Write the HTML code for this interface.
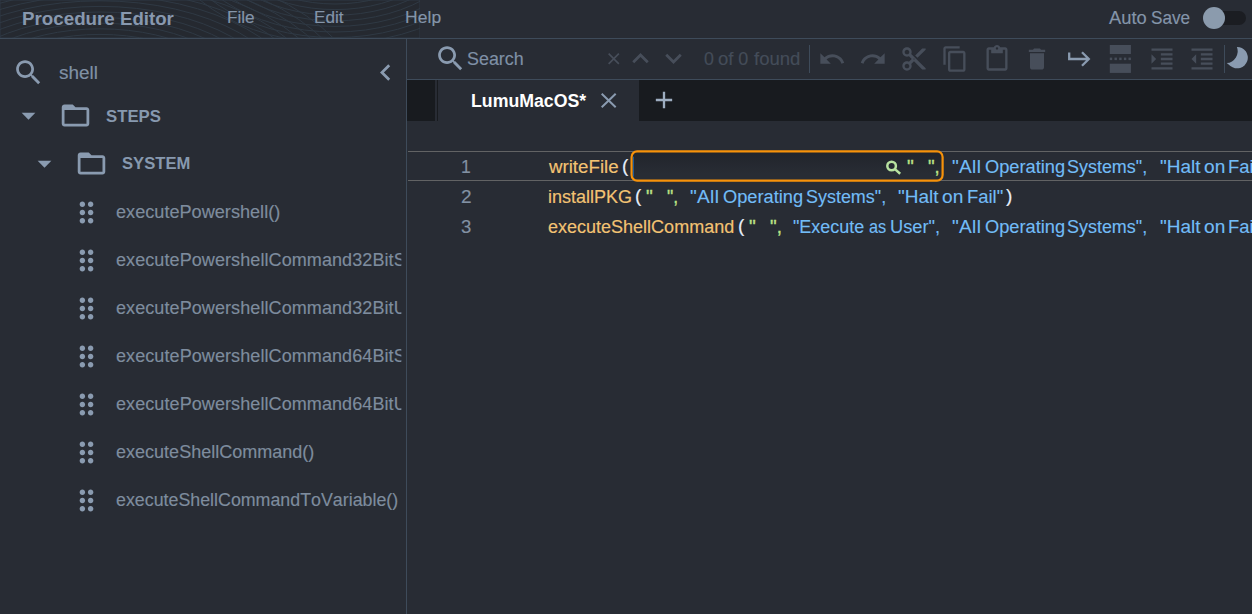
<!DOCTYPE html>
<html lang="en">
<head>
<meta charset="utf-8">
<title>Procedure Editor</title>
<style>
html,body{margin:0;padding:0;}
body{width:1252px;height:614px;overflow:hidden;background:#282c34;font-family:"Liberation Sans",sans-serif;position:relative;color:#8899ad;}
.abs{position:absolute;}
.t{position:absolute;white-space:pre;line-height:1;font-kerning:none;transform-origin:0 0;-webkit-text-stroke:0.15px;}
.b{-webkit-text-stroke:0;}
svg{position:absolute;display:block;overflow:visible;}
#waves{overflow:hidden;}
#header{left:0;top:0;width:1252px;height:38px;border-bottom:1px solid #3e4b5a;overflow:hidden;}
#sidebar{left:0;top:39px;width:406px;height:575px;border-right:1px solid #3e4b5a;overflow:hidden;}
#toolbar{left:407px;top:39px;width:845px;height:40px;border-bottom:1px solid #3e4b5a;}
#tabbar{left:407px;top:80px;width:845px;height:41px;background:#181b1f;}
#editor{left:407px;top:121px;width:845px;height:493px;overflow:hidden;}
.ic{fill:#8a9bb0;}
.dim{fill:#474e5a;}
.item{color:#7e8c9e;width:285.6px;overflow:hidden;-webkit-text-stroke:0.15px;}
.fn{color:#f3c373;-webkit-text-stroke:0.15px;}
.pn{color:#e6eefa;}
.st{color:#72bcf7;-webkit-text-stroke:0.12px;}
.gr{color:#bde386;-webkit-text-stroke:0.3px;}
.ln{color:#8291a3;}
</style>
</head>
<body>

<!-- ===== HEADER ===== -->
<div id="header" class="abs">
  <svg id="waves" style="left:0;top:0" width="420" height="38" viewBox="0 0 420 38" fill="none" stroke="#2f3944" stroke-width="1"><rect x="0" y="0" width="420" height="38" fill="#252930"/><ellipse cx="100" cy="110" rx="126" ry="70.0"/><ellipse cx="100" cy="110" rx="136" ry="75.6"/><ellipse cx="100" cy="110" rx="146" ry="81.2"/><ellipse cx="100" cy="110" rx="156" ry="86.8"/><ellipse cx="100" cy="110" rx="166" ry="92.4"/><ellipse cx="100" cy="110" rx="176" ry="98.0"/><ellipse cx="100" cy="110" rx="186" ry="103.6"/><ellipse cx="100" cy="110" rx="197" ry="109.2"/><ellipse cx="100" cy="110" rx="207" ry="114.8"/><ellipse cx="100" cy="110" rx="217" ry="120.4"/><ellipse cx="100" cy="110" rx="227" ry="126.0"/><ellipse cx="100" cy="110" rx="237" ry="131.6"/><ellipse cx="100" cy="110" rx="247" ry="137.2"/><ellipse cx="100" cy="110" rx="257" ry="142.8"/><ellipse cx="100" cy="110" rx="267" ry="148.4"/><ellipse cx="335" cy="-72" rx="114" ry="76.0"/><ellipse cx="335" cy="-72" rx="122" ry="81.6"/><ellipse cx="335" cy="-72" rx="131" ry="87.2"/><ellipse cx="335" cy="-72" rx="139" ry="92.8"/><ellipse cx="335" cy="-72" rx="148" ry="98.4"/><ellipse cx="335" cy="-72" rx="156" ry="104.0"/><ellipse cx="335" cy="-72" rx="164" ry="109.6"/><ellipse cx="335" cy="-72" rx="173" ry="115.2"/></svg>
  <div class="abs" id="brand">
  <span class="t b" style="left:21.7px;top:10.0px;font-size:18px;font-weight:700;color:#8898ae;transform:scaleX(1.042)">Procedure</span>
  <span class="t b" style="left:119.7px;top:10.0px;font-size:18px;font-weight:700;color:#8898ae;transform:scaleX(1.035)">Editor</span>
  </div>
  <div class="t" style="left:226.6px;top:9.7px;font-size:16px;color:#8495aa;transform:scaleX(1.073)">File</div>
  <div class="t" style="left:314.3px;top:9.7px;font-size:16px;color:#8495aa;transform:scaleX(1.071)">Edit</div>
  <div class="t" style="left:404.8px;top:9.7px;font-size:16px;letter-spacing:0.12px;color:#8495aa;transform:scaleX(1.090)">Help</div>
  <div class="abs" id="autosave">
  <span class="t" style="left:1109.2px;top:9.0px;font-size:18px;color:#8495aa;transform:scaleX(1.018)">Auto</span>
  <span class="t" style="left:1150.7px;top:9.0px;font-size:18px;color:#8495aa;transform:scaleX(0.954)">Save</span>
  </div>
  <div class="abs" style="left:1213px;top:11px;width:33px;height:14px;border-radius:7px;background:#1b1d22"></div>
  <div class="abs" style="left:1202.8px;top:6.8px;width:22px;height:22px;border-radius:50%;background:#8b9bad"></div>
</div>

<!-- ===== SIDEBAR ===== -->
<div id="sidebar" class="abs">
  <svg class="ic" style="left:11.8px;top:17.1px" width="33" height="33" viewBox="0 0 24 24"><path d="M15.5 14h-.79l-.28-.27C15.41 12.59 16 11.11 16 9.5 16 5.91 13.09 3 9.5 3S3 5.91 3 9.5 5.91 16 9.5 16c1.61 0 3.09-.59 4.23-1.57l.27.28v.79l5 4.99L20.49 19l-4.99-5zm-6 0C7.01 14 5 11.99 5 9.5S7.01 5 9.5 5 14 7.01 14 9.5 11.99 14 9.5 14z"/></svg>
  <div class="t" style="left:58.6px;top:26.1px;font-size:17.5px;color:#8091a5;transform:scaleX(1.083)">shell</div>
  <svg class="ic" style="left:369.0px;top:16.6px" width="33" height="33" viewBox="0 0 24 24"><path d="M15.41 7.41L14 6l-6 6 6 6 1.41-1.41L10.83 12z"/></svg>
  <svg class="ic" style="left:12.0px;top:59.6px" width="33" height="33" viewBox="0 0 24 24"><path d="M7 10l5 5 5-5z"/></svg>
  <svg class="ic" style="left:58.6px;top:59.6px" width="33" height="33" viewBox="0 0 24 24"><path d="M20 6h-8l-2-2H4c-1.1 0-1.99.9-1.99 2L2 18c0 1.1.9 2 2 2h16c1.1 0 2-.9 2-2V8c0-1.1-.9-2-2-2zm0 12H4V8h16v10z"/></svg>
  <div class="t b" style="left:105.6px;top:69.2px;font-size:16.5px;font-weight:700;color:#8799af;transform:scaleX(1.015)">STEPS</div>
  <svg class="ic" style="left:28.4px;top:107.6px" width="33" height="33" viewBox="0 0 24 24"><path d="M7 10l5 5 5-5z"/></svg>
  <svg class="ic" style="left:75.2px;top:107.6px" width="33" height="33" viewBox="0 0 24 24"><path d="M20 6h-8l-2-2H4c-1.1 0-1.99.9-1.99 2L2 18c0 1.1.9 2 2 2h16c1.1 0 2-.9 2-2V8c0-1.1-.9-2-2-2zm0 12H4V8h16v10z"/></svg>
  <div class="t b" style="left:122.3px;top:116.2px;font-size:16.5px;font-weight:700;color:#8799af;transform:scaleX(1.007)">SYSTEM</div>
  <svg class="ic" style="left:69.7px;top:156.8px" width="33" height="33" viewBox="0 0 24 24"><path d="M11 18c0 1.1-.9 2-2 2s-2-.9-2-2 .9-2 2-2 2 .9 2 2zm-2-8c-1.1 0-2 .9-2 2s.9 2 2 2 2-.9 2-2-.9-2-2-2zm0-6c-1.1 0-2 .9-2 2s.9 2 2 2 2-.9 2-2-.9-2-2-2zm6 4c1.1 0 2-.9 2-2s-.9-2-2-2-2 .9-2 2 .9 2 2 2zm0 2c-1.1 0-2 .9-2 2s.9 2 2 2 2-.9 2-2-.9-2-2-2zm0 6c-1.1 0-2 .9-2 2s.9 2 2 2 2-.9 2-2-.9-2-2-2z"/></svg>
  <div class="t item" style="left:116.3px;top:164.4px;font-size:17.5px;height:22px;line-height:22px;margin-top:-2.25px;transform:scaleX(1.036)">executePowershell()</div>
  <svg class="ic" style="left:69.7px;top:204.8px" width="33" height="33" viewBox="0 0 24 24"><path d="M11 18c0 1.1-.9 2-2 2s-2-.9-2-2 .9-2 2-2 2 .9 2 2zm-2-8c-1.1 0-2 .9-2 2s.9 2 2 2 2-.9 2-2-.9-2-2-2zm0-6c-1.1 0-2 .9-2 2s.9 2 2 2 2-.9 2-2-.9-2-2-2zm6 4c1.1 0 2-.9 2-2s-.9-2-2-2-2 .9-2 2 .9 2 2 2zm0 2c-1.1 0-2 .9-2 2s.9 2 2 2 2-.9 2-2-.9-2-2-2zm0 6c-1.1 0-2 .9-2 2s.9 2 2 2 2-.9 2-2-.9-2-2-2z"/></svg>
  <div class="t item" style="left:116.3px;top:212.4px;font-size:17.5px;letter-spacing:0.072px;height:22px;line-height:22px;margin-top:-2.25px;transform:scaleX(1.03);width:276.9px">executePowershellCommand32BitSystem()</div>
  <svg class="ic" style="left:69.7px;top:252.8px" width="33" height="33" viewBox="0 0 24 24"><path d="M11 18c0 1.1-.9 2-2 2s-2-.9-2-2 .9-2 2-2 2 .9 2 2zm-2-8c-1.1 0-2 .9-2 2s.9 2 2 2 2-.9 2-2-.9-2-2-2zm0-6c-1.1 0-2 .9-2 2s.9 2 2 2 2-.9 2-2-.9-2-2-2zm6 4c1.1 0 2-.9 2-2s-.9-2-2-2-2 .9-2 2 .9 2 2 2zm0 2c-1.1 0-2 .9-2 2s.9 2 2 2 2-.9 2-2-.9-2-2-2zm0 6c-1.1 0-2 .9-2 2s.9 2 2 2 2-.9 2-2-.9-2-2-2z"/></svg>
  <div class="t item" style="left:116.3px;top:260.4px;font-size:17.5px;letter-spacing:0.072px;height:22px;line-height:22px;margin-top:-2.25px;transform:scaleX(1.03);width:276.9px">executePowershellCommand32BitUser()</div>
  <svg class="ic" style="left:69.7px;top:300.8px" width="33" height="33" viewBox="0 0 24 24"><path d="M11 18c0 1.1-.9 2-2 2s-2-.9-2-2 .9-2 2-2 2 .9 2 2zm-2-8c-1.1 0-2 .9-2 2s.9 2 2 2 2-.9 2-2-.9-2-2-2zm0-6c-1.1 0-2 .9-2 2s.9 2 2 2 2-.9 2-2-.9-2-2-2zm6 4c1.1 0 2-.9 2-2s-.9-2-2-2-2 .9-2 2 .9 2 2 2zm0 2c-1.1 0-2 .9-2 2s.9 2 2 2 2-.9 2-2-.9-2-2-2zm0 6c-1.1 0-2 .9-2 2s.9 2 2 2 2-.9 2-2-.9-2-2-2z"/></svg>
  <div class="t item" style="left:116.3px;top:308.4px;font-size:17.5px;letter-spacing:0.072px;height:22px;line-height:22px;margin-top:-2.25px;transform:scaleX(1.03);width:276.9px">executePowershellCommand64BitSystem()</div>
  <svg class="ic" style="left:69.7px;top:348.8px" width="33" height="33" viewBox="0 0 24 24"><path d="M11 18c0 1.1-.9 2-2 2s-2-.9-2-2 .9-2 2-2 2 .9 2 2zm-2-8c-1.1 0-2 .9-2 2s.9 2 2 2 2-.9 2-2-.9-2-2-2zm0-6c-1.1 0-2 .9-2 2s.9 2 2 2 2-.9 2-2-.9-2-2-2zm6 4c1.1 0 2-.9 2-2s-.9-2-2-2-2 .9-2 2 .9 2 2 2zm0 2c-1.1 0-2 .9-2 2s.9 2 2 2 2-.9 2-2-.9-2-2-2zm0 6c-1.1 0-2 .9-2 2s.9 2 2 2 2-.9 2-2-.9-2-2-2z"/></svg>
  <div class="t item" style="left:116.3px;top:356.4px;font-size:17.5px;letter-spacing:0.072px;height:22px;line-height:22px;margin-top:-2.25px;transform:scaleX(1.03);width:276.9px">executePowershellCommand64BitUser()</div>
  <svg class="ic" style="left:69.7px;top:396.8px" width="33" height="33" viewBox="0 0 24 24"><path d="M11 18c0 1.1-.9 2-2 2s-2-.9-2-2 .9-2 2-2 2 .9 2 2zm-2-8c-1.1 0-2 .9-2 2s.9 2 2 2 2-.9 2-2-.9-2-2-2zm0-6c-1.1 0-2 .9-2 2s.9 2 2 2 2-.9 2-2-.9-2-2-2zm6 4c1.1 0 2-.9 2-2s-.9-2-2-2-2 .9-2 2 .9 2 2 2zm0 2c-1.1 0-2 .9-2 2s.9 2 2 2 2-.9 2-2-.9-2-2-2zm0 6c-1.1 0-2 .9-2 2s.9 2 2 2 2-.9 2-2-.9-2-2-2z"/></svg>
  <div class="t item" style="left:116.3px;top:404.4px;font-size:17.5px;height:22px;line-height:22px;margin-top:-2.25px;transform:scaleX(1.030)">executeShellCommand()</div>
  <svg class="ic" style="left:69.7px;top:444.8px" width="33" height="33" viewBox="0 0 24 24"><path d="M11 18c0 1.1-.9 2-2 2s-2-.9-2-2 .9-2 2-2 2 .9 2 2zm-2-8c-1.1 0-2 .9-2 2s.9 2 2 2 2-.9 2-2-.9-2-2-2zm0-6c-1.1 0-2 .9-2 2s.9 2 2 2 2-.9 2-2-.9-2-2-2zm6 4c1.1 0 2-.9 2-2s-.9-2-2-2-2 .9-2 2 .9 2 2 2zm0 2c-1.1 0-2 .9-2 2s.9 2 2 2 2-.9 2-2-.9-2-2-2zm0 6c-1.1 0-2 .9-2 2s.9 2 2 2 2-.9 2-2-.9-2-2-2z"/></svg>
  <div class="t item" style="left:116.3px;top:452.4px;font-size:17.5px;height:22px;line-height:22px;margin-top:-2.25px;transform:scaleX(1.018)">executeShellCommandToVariable()</div>
</div>

<!-- ===== TOOLBAR ===== -->
<div id="toolbar" class="abs">
  <svg class="ic" style="left:26.6px;top:2.9px" width="33" height="33" viewBox="0 0 24 24"><path d="M15.5 14h-.79l-.28-.27C15.41 12.59 16 11.11 16 9.5 16 5.91 13.09 3 9.5 3S3 5.91 3 9.5 5.91 16 9.5 16c1.61 0 3.09-.59 4.23-1.57l.27.28v.79l5 4.99L20.49 19l-4.99-5zm-6 0C7.01 14 5 11.99 5 9.5S7.01 5 9.5 5 14 7.01 14 9.5 11.99 14 9.5 14z"/></svg>
  <div class="t" style="left:59.6px;top:11.0px;font-size:18px;color:#7f90a6;transform:scaleX(0.994)">Search</div>
  <svg class="dim" style="left:197.4px;top:9.9px" width="19.5" height="19.5" viewBox="0 0 24 24"><path d="M19 6.41L17.59 5 12 10.59 6.41 5 5 6.41 10.59 12 5 17.59 6.41 19 12 13.41 17.59 19 19 17.59 13.41 12z"/></svg>
  <svg class="dim" style="left:216.7px;top:3.1px" width="33" height="33" viewBox="0 0 24 24"><path d="M12 8l-6 6 1.41 1.41L12 10.83l4.59 4.58L18 14z"/></svg>
  <svg class="dim" style="left:249.7px;top:3.0px" width="33" height="33" viewBox="0 0 24 24"><path d="M16.59 8.59L12 13.17 7.41 8.59 6 10l6 6 6-6z"/></svg>
  <div class="abs" id="found">
  <span class="t" style="left:296.5px;top:11.0px;font-size:18px;color:#444c59;transform:scaleX(0.988)">0</span>
  <span class="t" style="left:311.2px;top:11.0px;font-size:18px;color:#444c59;transform:scaleX(1.029)">of</span>
  <span class="t" style="left:331.3px;top:11.0px;font-size:18px;color:#444c59">0</span>
  <span class="t" style="left:346.6px;top:11.0px;font-size:18px;color:#444c59;transform:scaleX(1.031)">found</span>
  </div>
  <div class="abs" style="left:402px;top:6px;width:1px;height:28px;background:#3e4b5a"></div>
  <svg class="dim" style="left:410.6px;top:6.0px" width="28" height="28" viewBox="0 0 24 24"><path d="M12.5 8c-2.65 0-5.05.99-6.9 2.6L2 7v9h9l-3.62-3.62c1.39-1.16 3.16-1.88 5.12-1.88 3.54 0 6.55 2.31 7.6 5.5l2.37-.78C21.08 11.03 17.15 8 12.5 8z"/></svg>
  <svg class="dim" style="left:451.8px;top:6.0px" width="28" height="28" viewBox="0 0 24 24"><path d="M18.4 10.6C16.55 8.99 14.15 8 11.5 8c-4.65 0-8.58 3.03-9.96 7.22L3.9 16c1.05-3.19 4.05-5.5 7.6-5.5 1.95 0 3.73.72 5.12 1.88L13 16h9V7l-3.6 3.6z"/></svg>
  <svg class="dim" style="left:493.0px;top:6.0px" width="28" height="28" viewBox="0 0 24 24"><path d="M9.64 7.64c.23-.5.36-1.05.36-1.64 0-2.21-1.79-4-4-4S2 3.79 2 6s1.79 4 4 4c.59 0 1.14-.13 1.64-.36L10 12l-2.36 2.36C7.14 14.13 6.59 14 6 14c-2.21 0-4 1.79-4 4s1.79 4 4 4 4-1.79 4-4c0-.59-.13-1.14-.36-1.64L12 14l7 7h3v-1L9.64 7.64zM6 8c-1.1 0-2-.89-2-2s.9-2 2-2 2 .89 2 2-.9 2-2 2zm0 12c-1.1 0-2-.89-2-2s.9-2 2-2 2 .89 2 2-.9 2-2 2zm6-7.5c-.28 0-.5-.22-.5-.5s.22-.5.5-.5.5.22.5.5-.22.5-.5.5zM19 3l-6 6 2 2 7-7V3z"/></svg>
  <svg class="dim" style="left:534.3px;top:6.0px" width="28" height="28" viewBox="0 0 24 24"><path d="M16 1H4c-1.1 0-2 .9-2 2v14h2V3h12V1zm3 4H8c-1.1 0-2 .9-2 2v14c0 1.1.9 2 2 2h11c1.1 0 2-.9 2-2V7c0-1.1-.9-2-2-2zm0 16H8V7h11v14z"/></svg>
  <svg class="dim" style="left:575.5px;top:6.0px" width="28" height="28" viewBox="0 0 24 24"><path d="M19 2h-4.18C14.4.84 13.3 0 12 0c-1.3 0-2.4.84-2.82 2H5c-1.1 0-2 .9-2 2v16c0 1.1.9 2 2 2h14c1.1 0 2-.9 2-2V4c0-1.1-.9-2-2-2zm-7 0c.55 0 1 .45 1 1s-.45 1-1 1-1-.45-1-1 .45-1 1-1zm7 18H5V4h2v3h10V4h2v16z"/></svg>
  <svg class="dim" style="left:616.2px;top:6.0px" width="28" height="28" viewBox="0 0 24 24"><path d="M6 19c0 1.1.9 2 2 2h8c1.1 0 2-.9 2-2V7H6v12zM19 4h-3.5l-1-1h-5l-1 1H5v2h14V4z"/></svg>
  <svg style="left:657.9px;top:6px" width="28" height="28" viewBox="0 0 28 28" fill="none" stroke="#8a9bb0" stroke-width="2.3"><path d="M4.2 7.6V14h19.2M17.0 7.2l6.8 6.8-6.8 6.8"/></svg>
  <svg class="dim" style="left:699.1px;top:6px" width="28" height="28" viewBox="0 0 28 28"><rect x="3.8" y="0" width="21.1" height="9"/><rect x="3.8" y="18.7" width="21.1" height="9.2"/><rect x="3.8" y="12.6" width="2.4" height="2.5"/><rect x="8.5" y="12.6" width="2.4" height="2.5"/><rect x="13.2" y="12.6" width="2.4" height="2.5"/><rect x="17.9" y="12.6" width="2.4" height="2.5"/><rect x="22.5" y="12.6" width="2.4" height="2.5"/></svg>
  <svg class="dim" style="left:741.0px;top:6.0px" width="28" height="28" viewBox="0 0 24 24"><path d="M3 21h18v-2H3v2zM3 8v8l4-4-4-4zm8 9h10v-2H11v2zM3 3v2h18V3H3zm8 6h10V7H11v2zm0 4h10v-2H11v2z"/></svg>
  <svg class="dim" style="left:781.4px;top:6.0px" width="28" height="28" viewBox="0 0 24 24"><path d="M11 17h10v-2H11v2zm-8-5l4 4V8l-4 4zm0 9h18v-2H3v2zM3 3v2h18V3H3zm8 6h10V7H11v2zm0 4h10v-2H11v2z"/></svg>
  <div class="abs" style="left:817px;top:6px;width:1px;height:28px;background:#3e4b5a"></div>
  <svg class="ic" style="left:817px;top:6px" width="28" height="28" viewBox="1224 45 28 28"><path d="M1236.9 46.95A10.7 10.7 0 1 1 1230.4 65.97L1226.8 63.1A11.9 11.9 0 0 0 1236.9 46.95z"/></svg>
</div>

<!-- ===== TAB BAR ===== -->
<div id="tabbar" class="abs">
  <div class="abs" style="left:28px;top:0;width:2px;height:41px;background:#282c34"></div>
  <div class="abs" style="left:31px;top:0;width:201px;height:41px;background:#282c34"></div>
  <div class="t b" style="left:64.0px;top:12.0px;font-size:18px;font-weight:700;color:#ffffff;transform:scaleX(0.984)">LumuMacOS*</div>
  <svg style="left:193.9px;top:12.5px" width="15.4" height="15" viewBox="0 0 15.4 15" fill="none" stroke="#8a9bb0" stroke-width="2"><path d="M0.7 0.7L14.7 14.3M14.7 0.7L0.7 14.3"/></svg>
  <svg class="" style="left:242.7px;top:5.9px;fill:#9eaec1" width="28" height="28" viewBox="0 0 24 24"><path d="M19 13h-6v6h-2v-6H5v-2h6V5h2v6h6v2z"/></svg>
</div>

<!-- ===== EDITOR ===== -->
<div id="editor" class="abs">
  <div class="abs" style="left:1px;top:30px;width:844px;height:28px;border-top:1px solid #626364;border-bottom:1px solid #626364"></div>
  <div class="abs line">
    <span class="t ln" style="left:53.9px;top:38.2px;font-size:17.5px;transform:scaleX(1.007)">1</span>
    <span class="t fn" style="left:141.9px;top:38.2px;font-size:17.5px;transform:scaleX(1.068)">writeFile</span>
    <span class="t pn" style="left:215.2px;top:37.2px;font-size:17.5px;transform:scaleX(1.090)">(</span>
    <svg style="left:223px;top:29px" width="315" height="32" viewBox="630 150 315 32"><defs><linearGradient id="ig" x1="0" y1="0" x2="0" y2="1"><stop offset="0" stop-color="#21242b"/><stop offset="0.75" stop-color="#282c34"/></linearGradient></defs><rect x="631.6" y="151.45" width="311" height="29.1" rx="5.5" fill="url(#ig)" stroke="#f7920a" stroke-width="2.2"/><rect x="632.9" y="156.7" width="1" height="20" fill="#1d5fa3"/></svg>
    <svg style="left:477px;top:38px" width="18" height="16" viewBox="884 159 18 16" fill="none" stroke="#b8e2a0" stroke-width="2.5"><circle cx="891.6" cy="166" r="4.3"/><path d="M894.6 168.9L900.2 173.8"/></svg>
    <span class="t gr" style="left:500.1px;top:38.2px;font-size:17.5px;transform:scaleX(1.090)">"</span>
    <span class="t gr" style="left:521.1px;top:38.2px;font-size:17.5px;transform:scaleX(1.062)">",</span>
    <span class="t st" style="left:544.5px;top:38.2px;font-size:17.5px;letter-spacing:0.28px;transform:scaleX(1.090)">"All</span>
    <span class="t st" style="left:577.5px;top:38.2px;font-size:17.5px;transform:scaleX(1.043)">Operating</span>
    <span class="t st" style="left:660.2px;top:38.2px;font-size:17.5px;transform:scaleX(1.025)">Systems",</span>
    <span class="t st" style="left:752.6px;top:38.2px;font-size:17.5px;transform:scaleX(1.083)">"Halt</span>
    <span class="t st" style="left:796.7px;top:38.2px;font-size:17.5px;letter-spacing:0.2px;transform:scaleX(1.090)">on</span>
    <span class="t st" style="left:821.1px;top:38.2px;font-size:17.5px;transform:scaleX(1.052)">Fail"</span>
  </div>
  <div class="abs line">
    <span class="t ln" style="left:53.6px;top:68.2px;font-size:17.5px;transform:scaleX(1.090)">2</span>
    <span class="t fn" style="left:140.7px;top:68.2px;font-size:17.5px;transform:scaleX(1.028)">installPKG</span>
    <span class="t pn" style="left:227.9px;top:67.2px;font-size:17.5px;transform:scaleX(1.090)">(</span>
    <span class="t gr" style="left:238.7px;top:68.2px;font-size:17.5px;transform:scaleX(1.090)">"</span>
    <span class="t gr" style="left:259.9px;top:68.2px;font-size:17.5px;transform:scaleX(1.005)">",</span>
    <span class="t st" style="left:283.0px;top:68.2px;font-size:17.5px;letter-spacing:0.28px;transform:scaleX(1.090)">"All</span>
    <span class="t st" style="left:316.0px;top:68.2px;font-size:17.5px;transform:scaleX(1.043)">Operating</span>
    <span class="t st" style="left:398.7px;top:68.2px;font-size:17.5px;transform:scaleX(1.025)">Systems",</span>
    <span class="t st" style="left:491.0px;top:68.2px;font-size:17.5px;transform:scaleX(1.083)">"Halt</span>
    <span class="t st" style="left:535.1px;top:68.2px;font-size:17.5px;letter-spacing:0.2px;transform:scaleX(1.090)">on</span>
    <span class="t st" style="left:559.5px;top:68.2px;font-size:17.5px;transform:scaleX(1.052)">Fail"</span>
    <span class="t pn" style="left:599.3px;top:67.2px;font-size:17.5px;transform:scaleX(1.090)">)</span>
  </div>
  <div class="abs line">
    <span class="t ln" style="left:53.9px;top:98.2px;font-size:17.5px;transform:scaleX(1.061)">3</span>
    <span class="t fn" style="left:141.1px;top:98.2px;font-size:17.5px;transform:scaleX(1.029)">executeShellCommand</span>
    <span class="t pn" style="left:330.6px;top:97.2px;font-size:17.5px;transform:scaleX(1.090)">(</span>
    <span class="t gr" style="left:341.6px;top:98.2px;font-size:17.5px;transform:scaleX(1.090)">"</span>
    <span class="t gr" style="left:362.6px;top:98.2px;font-size:17.5px;transform:scaleX(1.073)">",</span>
    <span class="t st" style="left:385.9px;top:98.2px;font-size:17.5px;transform:scaleX(1.025)">"Execute</span>
    <span class="t st" style="left:461.5px;top:98.2px;font-size:17.5px;transform:scaleX(0.930)">as</span>
    <span class="t st" style="left:483.4px;top:98.2px;font-size:17.5px;transform:scaleX(1.042)">User",</span>
    <span class="t st" style="left:544.5px;top:98.2px;font-size:17.5px;letter-spacing:0.28px;transform:scaleX(1.090)">"All</span>
    <span class="t st" style="left:577.5px;top:98.2px;font-size:17.5px;transform:scaleX(1.043)">Operating</span>
    <span class="t st" style="left:660.2px;top:98.2px;font-size:17.5px;transform:scaleX(1.025)">Systems",</span>
    <span class="t st" style="left:752.6px;top:98.2px;font-size:17.5px;transform:scaleX(1.083)">"Halt</span>
    <span class="t st" style="left:796.7px;top:98.2px;font-size:17.5px;letter-spacing:0.2px;transform:scaleX(1.090)">on</span>
    <span class="t st" style="left:821.1px;top:98.2px;font-size:17.5px;transform:scaleX(1.052)">Fail"</span>
  </div>
</div>

</body>
</html>
